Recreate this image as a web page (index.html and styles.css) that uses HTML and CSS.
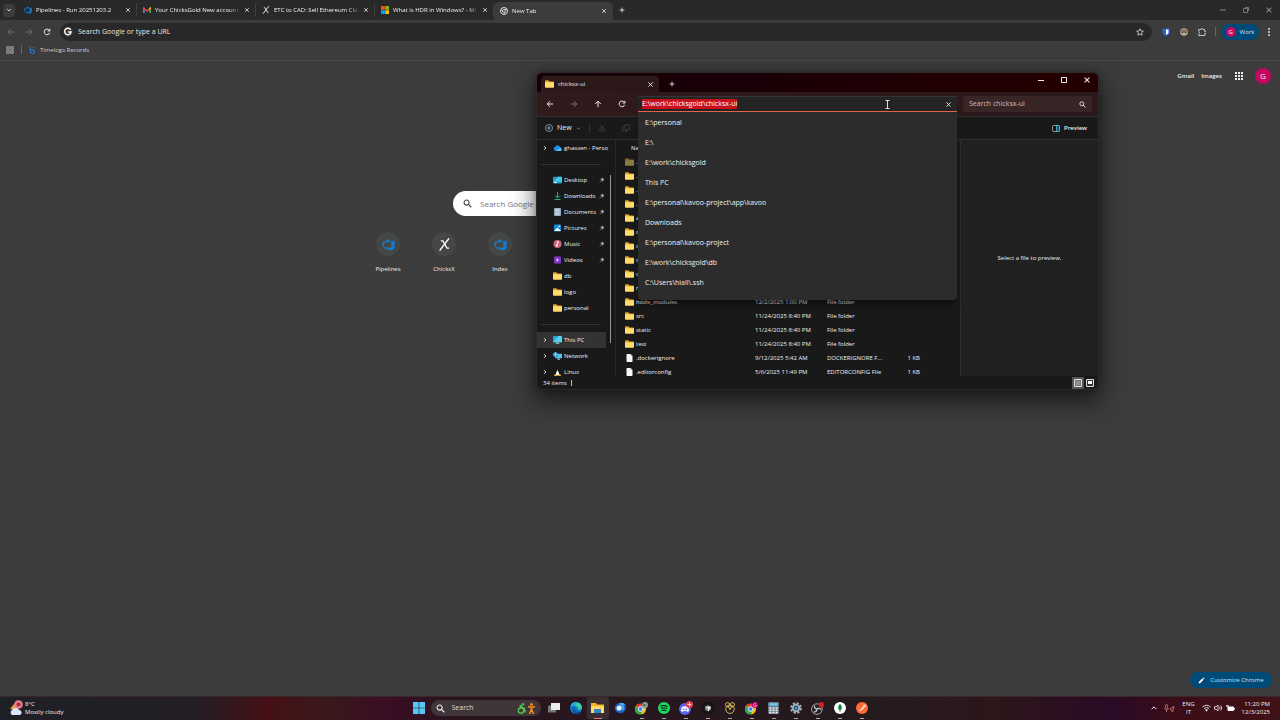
FILE: index.html
```html
<!doctype html>
<html lang="en">
<head>
<meta charset="utf-8">
<meta name="viewport" content="width=device-width">
<title>New Tab</title>
<link rel="stylesheet" href="styles.css">
</head>
<body>
<svg class="defs" aria-hidden="true">
  <symbol id="x" viewBox="0 0 10 10"><path d="M2 2l6 6M8 2l-6 6" fill="none" stroke="currentColor" stroke-width="1.3"/></symbol>
  <symbol id="plus" viewBox="0 0 10 10"><path d="M5 1v8M1 5h8" fill="none" stroke="currentColor" stroke-width="1.4"/></symbol>
  <symbol id="arrow" viewBox="0 0 10 10"><path d="M9 5H1.5M5 1.500L1.500 5L5 8.500" fill="none" stroke="currentColor" stroke-width="1.2"/></symbol>
  <symbol id="chev" viewBox="0 0 10 10"><path d="M2 3.500l3 3l3-3" fill="none" stroke="currentColor" stroke-width="1.5"/></symbol>
  <symbol id="reload" viewBox="0 0 10 10"><path d="M8.300 6a3.500 3.500 0 1 1-.5-3.200L8.500 3.600M8.600 1v2.800H5.800" fill="none" stroke="currentColor" stroke-width="1.200"/></symbol>
  <symbol id="lens" viewBox="0 0 10 10"><circle cx="4" cy="4" r="2.800" fill="none" stroke="currentColor" stroke-width="1.200"/><path d="M6 6l3.200 3.200" stroke="currentColor" stroke-width="1.300"/></symbol>
  <symbol id="devops" viewBox="0 0 16 16"><path fill="#0f7bd4" d="M15.500 3v9.500l-4 3L5.500 13.200v2.300L2 11.200l9.300.8V4.200zM11.400 4.200L6 1v2.200L1.700 4.500.5 6v4.300l2 .9V5.700z"/></symbol>
  <symbol id="chicks" viewBox="0 0 16 16"><path d="M13.500.5L2 15.500" stroke="#fff" stroke-width="1.800"/><path d="M3.500 3.500h2.500l5 9h2.500" fill="none" stroke="#fff" stroke-width="1.500"/></symbol>
  <symbol id="folder" viewBox="0 0 16 13"><path fill="#e0a526" d="M0 1.500Q0 0 1.500 0H6l2 2h6.500Q16 2 16 3.500V5H0z"/><rect y="3.500" width="16" height="9.500" rx="1.200" fill="#ffdc6b"/></symbol>
  <symbol id="file" viewBox="0 0 12 16"><path d="M0 1.500Q0 0 1.500 0H8l4 4v10.500Q12 16 10.500 16h-9Q0 16 0 14.500z" fill="#f7f7f7"/><path d="M8 0v4h4z" fill="#b9b9b9"/></symbol>
  <symbol id="pin" viewBox="0 0 10 10"><path d="M5.500 1L9 4.500 7.500 5 6.500 8 2 3.500l3-1z" fill="#a4a4a4"/><path d="M4.500 5.500L1 9" stroke="#a4a4a4"/></symbol>
  <symbol id="pc" viewBox="0 0 16 14"><rect y="0" width="16" height="11" rx="1" fill="#2aa3d6"/><path d="M0 11L10 0h5l1 1v10z" fill="#56cfe8"/><path d="M6 11h4v2h2v1H4v-1h2z" fill="#8fb3c2"/></symbol>
  <symbol id="chrome" viewBox="0 0 20 20"><circle cx="10" cy="10" r="10" fill="#fbc116"/><path d="M10 10L1.400 5A10 10 0 0 1 18.700 5z" fill="#e33b2e"/><path d="M10 10L1.400 5A10 10 0 0 0 10 20l4.500-7.500z" fill="#2da94f"/><circle cx="10" cy="10" r="4.800" fill="#fff"/><circle cx="10" cy="10" r="3.700" fill="#3f83ef"/></symbol>
</svg>

<div class="browser">
  <header>
    <nav class="tabs">
      <button class="tabmenu" aria-label="Search tabs"><svg width="6" height="6"><use href="#chev"/></svg></button>
      <div class="tab"><svg width="8" height="8"><use href="#devops"/></svg><span>Pipelines - Run 20251203.2</span><button aria-label="Close"><svg width="6" height="6"><use href="#x"/></svg></button></div>
      <div class="tab"><svg width="8" height="8" viewBox="0 0 16 16"><path d="M0 3h3.500v11H0z" fill="#4285f4"/><path d="M12.500 3H16v11h-3.500z" fill="#34a853"/><path d="M0 2l8 6 8-6v4l-8 6-8-6z" fill="#ea4335"/><path d="M12.500 4.500L16 2v4l-3.500 2.500z" fill="#fbbc04"/></svg><span>Your ChicksGold New account</span><button aria-label="Close"><svg width="6" height="6"><use href="#x"/></svg></button></div>
      <div class="tab"><svg width="8" height="8"><use href="#chicks"/></svg><span>ETC to CAD: Sell Ethereum Clas</span><button aria-label="Close"><svg width="6" height="6"><use href="#x"/></svg></button></div>
      <div class="tab"><svg width="8" height="8" viewBox="0 0 16 16"><path d="M0 0h7.600v7.600H0z" fill="#f25022"/><path d="M8.400 0H16v7.600H8.400z" fill="#7fba00"/><path d="M0 8.400h7.600V16H0z" fill="#00a4ef"/><path d="M8.400 8.400H16V16H8.400z" fill="#ffb900"/></svg><span>What is HDR in Windows? - Mi</span><button aria-label="Close"><svg width="6" height="6"><use href="#x"/></svg></button></div>
      <div class="tab on"><svg width="8" height="8" viewBox="0 0 16 16"><circle cx="8" cy="8" r="7" fill="none" stroke="#ddd" stroke-width="2"/><circle cx="8" cy="8" r="3" fill="none" stroke="#ddd" stroke-width="1.600"/><path d="M8 5h6M5.500 9.500L2.500 4.500M10.500 9.500L7.500 15" stroke="#ddd" stroke-width="1.600"/></svg><span>New Tab</span><button aria-label="Close"><svg width="6" height="6"><use href="#x"/></svg></button></div>
      <button class="newtab" aria-label="New tab"><svg width="6" height="6"><use href="#plus"/></svg></button>
      <div class="winbtns dim">
        <button aria-label="Minimize"><svg width="6" height="6" viewBox="0 0 6 6"><path d="M0 3h6" stroke="currentColor"/></svg></button>
        <button aria-label="Restore"><svg width="6" height="6" viewBox="0 0 6 6"><path d="M.5 1.500h4v4h-4zM2 .5h3.500V4" fill="none" stroke="currentColor" stroke-width=".8"/></svg></button>
        <button aria-label="Close"><svg width="8" height="8"><use href="#x"/></svg></button>
      </div>
    </nav>
    <div class="toolbar">
      <button class="off" aria-label="Back"><svg width="8" height="8"><use href="#arrow"/></svg></button>
      <button class="off flip" aria-label="Forward"><svg width="8" height="8"><use href="#arrow"/></svg></button>
      <button aria-label="Reload"><svg width="8" height="8"><use href="#reload"/></svg></button>
      <div class="omni">
        <svg width="10" height="10" viewBox="0 0 16 16"><circle cx="8" cy="8" r="8" fill="#3c3c3c"/><path d="M12.300 4.500A5.200 5.200 0 1 0 13 8H8.200" fill="none" stroke="#fff" stroke-width="2.200"/></svg>
        <input aria-label="Address" placeholder="Search Google or type a URL">
        <svg width="8" height="8" viewBox="0 0 16 16"><path d="M8 1.500l2 4.500 4.800.4-3.700 3.200 1.200 4.800L8 11.800l-4.300 2.600 1.200-4.800L1.200 6.400 6 6z" fill="none" stroke="#ddd" stroke-width="1.600"/></svg>
      </div>
      <div class="exts">
        <svg width="8" height="8" viewBox="0 0 16 16"><path d="M1 1h14v8q0 4-7 7-7-3-7-7z" fill="#2267d8"/><path d="M8 3h5v6q0 2.500-5 4.800z" fill="#fff"/></svg>
        <svg width="8" height="8" viewBox="0 0 16 16"><circle cx="8" cy="8" r="7.500" fill="#bfae9c"/><path d="M1 5q7-5 14 0v2H1z" fill="#85705f"/><circle cx="5" cy="8.500" r="2" fill="#40352e"/><circle cx="11" cy="8.500" r="2" fill="#40352e"/></svg>
        <svg width="8" height="8" viewBox="0 0 16 16"><path d="M1.500 3h4.500a2 2 0 1 1 4 0h3.500v4a2.200 2.200 0 1 1 0 4.200V15h-12v-3.800a2.200 2.200 0 0 0 0-4.200z" fill="none" stroke="#ddd" stroke-width="1.700"/></svg>
      </div>
      <i class="bar"></i>
      <button class="profile"><b>G</b>Work</button>
      <button aria-label="Menu"><svg width="4" height="8" viewBox="0 0 4 8"><path d="M2 0v2M2 3v2M2 6v2" stroke="#ddd" stroke-width="1.500"/></svg></button>
    </div>
    <div class="bookmarks">
      <svg width="8" height="8" viewBox="0 0 16 16"><path d="M1.500 1.500h5v5h-5zM9.500 1.500h5v5h-5zM1.500 9.500h5v5h-5zM9.500 9.500h5v5h-5z" fill="none" stroke="#aaa" stroke-width="2"/></svg>
      <i class="bar"></i>
      <a href="#"><svg width="7" height="8" viewBox="0 0 14 16"><path d="M2 1v6h6M3 7v5q0 3 4 3t4-3.500T7 8" fill="none" stroke="#2f78c8" stroke-width="2.200"/><circle cx="9.500" cy="3.500" r="1.600" fill="#2f78c8"/></svg>Timelogs Records</a>
    </div>
  </header>

  <main>
    <div class="gnav">
      <a href="#">Gmail</a>
      <a href="#">Images</a>
      <svg width="8" height="8" viewBox="0 0 8 8"><path d="M0 1h8M0 4h8M0 7h8" stroke="#eee" stroke-width="2" stroke-dasharray="2 1"/></svg>
      <b class="avatar">G</b>
    </div>
    <div class="search"><svg width="9" height="9"><use href="#lens"/></svg><input aria-label="Search" placeholder="Search Google or type a URL"></div>
    <div class="shortcuts">
      <a href="#"><i><svg width="13" height="13"><use href="#devops"/></svg></i>Pipelines</a>
      <a href="#"><i><svg width="13" height="13"><use href="#chicks"/></svg></i>ChicksX</a>
      <a href="#"><i><svg width="13" height="13"><use href="#devops"/></svg></i>Index</a>
    </div>
    <button class="customize"><svg width="7" height="7" viewBox="0 0 10 10"><path d="M1 9V7l5-5 2 2-5 5zM6.700 1.300L7.500.5l2 2-.8.8z" fill="#fff"/></svg>Customize Chrome</button>
  </main>
</div>

<section class="explorer">
  <div class="etitle">
    <div class="etab"><svg width="9" height="8"><use href="#folder"/></svg><span>chicksx-ui</span><button aria-label="Close tab"><svg width="7" height="7"><use href="#x"/></svg></button></div>
    <button class="newtab" aria-label="New tab"><svg width="6" height="6"><use href="#plus"/></svg></button>
    <div class="winbtns">
      <button aria-label="Minimize"><svg width="6" height="6" viewBox="0 0 6 6"><path d="M0 3.500h6" stroke="currentColor"/></svg></button>
      <button aria-label="Maximize"><svg width="6" height="6" viewBox="0 0 6 6"><path d="M.5.5h5v5h-5z" fill="none" stroke="currentColor"/></svg></button>
      <button aria-label="Close"><svg width="8" height="8"><use href="#x"/></svg></button>
    </div>
  </div>
  <div class="eaddr">
    <div class="enav">
      <button aria-label="Back"><svg width="8" height="8"><use href="#arrow"/></svg></button>
      <button class="off flip" aria-label="Forward"><svg width="8" height="8"><use href="#arrow"/></svg></button>
      <button class="up" aria-label="Up"><svg width="8" height="8"><use href="#arrow"/></svg></button>
      <button aria-label="Refresh"><svg width="8" height="8"><use href="#reload"/></svg></button>
    </div>
    <div class="path">
      <input id="path" aria-label="Path" value="E:\work\chicksgold\chicksx-ui" spellcheck="false">
      <button aria-label="Clear"><svg width="7" height="7"><use href="#x"/></svg></button>
      <svg class="ibeam" width="5" height="9" viewBox="0 0 5 9"><path d="M.5.5h4M.5 8.500h4M2.500 0v9" stroke="#ddd" fill="none"/></svg>
      <ul class="recent">
        <li>E:\personal</li>
        <li>E:\</li>
        <li>E:\work\chicksgold</li>
        <li>This PC</li>
        <li>E:\personal\kavoo-project\app\kavoo</li>
        <li>Downloads</li>
        <li>E:\personal\kavoo-project</li>
        <li>E:\work\chicksgold\db</li>
        <li>C:\Users\hiall\.ssh</li>
      </ul>
    </div>
    <div class="find"><input aria-label="Search folder" placeholder="Search chicksx-ui"><svg width="7" height="7"><use href="#lens"/></svg></div>
  </div>
  <div class="cmds">
    <button><svg width="8" height="8" viewBox="0 0 16 16"><circle cx="8" cy="8" r="7" fill="none" stroke="#9fb6c4" stroke-width="1.500"/><path d="M8 4v8M4 8h8" stroke="#7cc4ec" stroke-width="1.500"/></svg>New<svg class="more" width="5" height="5"><use href="#chev"/></svg></button>
    <i class="bar"></i>
    <button class="off" aria-label="Cut"><svg width="8" height="8" viewBox="0 0 16 16"><path d="M3 1l8 10M13 1L5 11" stroke="currentColor" stroke-width="1.300"/><circle cx="4" cy="13" r="2.300" fill="none" stroke="currentColor"/><circle cx="12" cy="13" r="2.300" fill="none" stroke="currentColor"/></svg></button>
    <button class="off" aria-label="Copy"><svg width="8" height="8" viewBox="0 0 16 16"><path d="M6 1.500h9v10H6zM6 4.500H1.500v10h8v-3" fill="none" stroke="currentColor" stroke-width="1.300"/></svg></button>
    <button class="preview"><svg width="8" height="7" viewBox="0 0 16 14"><rect x="1" y="1" width="14" height="12" rx="2" fill="none" stroke="#a9c4d0" stroke-width="1.500"/><path d="M9 1v12h4q2 0 2-2V3q0-2-2-2z" fill="#12506c" stroke="#5fc0ea" stroke-width="1.500"/></svg>Preview</button>
  </div>
  <div class="ebody">
    <ul class="side">
      <li><svg class="tw" width="6" height="6"><use href="#chev"/></svg><svg width="9" height="8" viewBox="0 0 18 14"><path d="M5 13a4.500 4.500 0 0 1-.5-8.500 5.500 5.500 0 0 1 10 1A4 4 0 0 1 14 13z" fill="#1c8fe8"/><path d="M5 13l9-6q4 1 3.500 3.500T14 13z" fill="#5cc3f7"/></svg><span>ghassen - Perso</span></li>
      <li class="rule"></li>
      <li><svg width="9" height="8" viewBox="0 0 16 14"><rect y="1" width="16" height="12" rx="1.500" fill="#1d9bd1"/><path d="M0 10L9 1h6l1 1v8z" fill="#46c8dc"/><path d="M2 10.500h5v1.500H2z" fill="#fff"/></svg><span>Desktop</span><svg class="pin" width="6" height="6"><use href="#pin"/></svg></li>
      <li><svg width="9" height="8" viewBox="0 0 16 16"><path d="M8 0v11M3 7l5 5 5-5M2 15h12" fill="none" stroke="#20b584" stroke-width="2"/></svg><span>Downloads</span><svg class="pin" width="6" height="6"><use href="#pin"/></svg></li>
      <li><svg width="9" height="8" viewBox="0 0 16 16"><rect x="1" width="14" height="16" rx="1.500" fill="#91abc3"/><path d="M4 4h8M4 8h3M9 8h3M4 12h8" stroke="#f0f6fb" stroke-width="2"/></svg><span>Documents</span><svg class="pin" width="6" height="6"><use href="#pin"/></svg></li>
      <li><svg width="9" height="8" viewBox="0 0 16 16"><rect x="1" y="1" width="14" height="14" rx="1.500" fill="#1789d5"/><path d="M1 14l7-7 7 7z" fill="#eef8ff"/><circle cx="11.500" cy="4.500" r="1.600" fill="#fff"/></svg><span>Pictures</span><svg class="pin" width="6" height="6"><use href="#pin"/></svg></li>
      <li><svg width="9" height="8" viewBox="0 0 16 16"><circle cx="8" cy="8" r="8" fill="#d0657b"/><path d="M8 11V3l3 2" fill="none" stroke="#fff" stroke-width="1.600"/><circle cx="6.500" cy="11" r="2" fill="#fff"/></svg><span>Music</span><svg class="pin" width="6" height="6"><use href="#pin"/></svg></li>
      <li><svg width="9" height="8" viewBox="0 0 16 16"><rect x="1" y="1" width="14" height="14" rx="1.500" fill="#8a3fd1"/><path d="M3 2v12M13 2v12" stroke="#512089" stroke-width="1.600" stroke-dasharray="2 1.500"/><path d="M6.500 5l4 3-4 3z" fill="#fff"/></svg><span>Videos</span><svg class="pin" width="6" height="6"><use href="#pin"/></svg></li>
      <li><svg width="9" height="8"><use href="#folder"/></svg><span>db</span></li>
      <li><svg width="9" height="8"><use href="#folder"/></svg><span>logo</span></li>
      <li><svg width="9" height="8"><use href="#folder"/></svg><span>personal</span></li>
      <li class="rule"></li>
      <li class="sel"><svg class="tw" width="6" height="6"><use href="#chev"/></svg><svg width="9" height="8"><use href="#pc"/></svg><span>This PC</span></li>
      <li><svg class="tw" width="6" height="6"><use href="#chev"/></svg><svg width="9" height="8" viewBox="0 0 16 14"><rect x="4" y="3" width="12" height="8" fill="#4dc4e6"/><path d="M8 11h4v3H8z" fill="#8fb3c2"/><circle cx="4.500" cy="4.500" r="4.500" fill="#2a8fd0"/><path d="M0 4.500h9M4.500 0v9" stroke="#c7ecf8"/></svg><span>Network</span></li>
      <li><svg class="tw" width="6" height="6"><use href="#chev"/></svg><svg width="9" height="8" viewBox="0 0 16 16"><path d="M8 0q3 0 3 4 0 2 2 5t1 6H2q-1-3 1-6t2-5q0-4 3-4z" fill="#111"/><path d="M8 5q2 1 3 5t-1 5H6q-2-1-1-5t3-5z" fill="#fff"/><path d="M1 16l2-5 4 5zM15 16l-2-5-4 5zM6.500 3.500h3L8 6z" fill="#f2b90c"/></svg><span>Linux</span></li>
    </ul>
    <div class="files">
      <table>
        <thead><tr><th class="n">Na</th><th class="d"></th><th class="t"></th><th class="s"></th></tr></thead>
        <tbody>
          <tr class="faded"><td><svg width="9" height="8"><use href="#folder"/></svg>.</td></tr>
          <tr><td><svg width="9" height="8"><use href="#folder"/></svg>.</td></tr>
          <tr><td><svg width="9" height="8"><use href="#folder"/></svg>.</td></tr>
          <tr><td><svg width="9" height="8"><use href="#folder"/></svg>.</td></tr>
          <tr><td><svg width="9" height="8"><use href="#folder"/></svg>a</td></tr>
          <tr><td><svg width="9" height="8"><use href="#folder"/></svg>c</td></tr>
          <tr><td><svg width="9" height="8"><use href="#folder"/></svg>c</td></tr>
          <tr><td><svg width="9" height="8"><use href="#folder"/></svg>c</td></tr>
          <tr><td><svg width="9" height="8"><use href="#folder"/></svg>c</td></tr>
          <tr><td><svg width="9" height="8"><use href="#folder"/></svg>n</td></tr>
          <tr><td><svg width="9" height="8"><use href="#folder"/></svg>node_modules</td><td>12/2/2025 1:00 PM</td><td>File folder</td><td></td></tr>
          <tr><td><svg width="9" height="8"><use href="#folder"/></svg>src</td><td>11/24/2025 8:40 PM</td><td>File folder</td><td></td></tr>
          <tr><td><svg width="9" height="8"><use href="#folder"/></svg>static</td><td>11/24/2025 8:40 PM</td><td>File folder</td><td></td></tr>
          <tr><td><svg width="9" height="8"><use href="#folder"/></svg>test</td><td>11/24/2025 8:40 PM</td><td>File folder</td><td></td></tr>
          <tr><td><svg width="9" height="8"><use href="#file"/></svg>.dockerignore</td><td>9/12/2025 5:42 AM</td><td>DOCKERIGNORE F...</td><td>1 KB</td></tr>
          <tr><td><svg width="9" height="8"><use href="#file"/></svg>.editorconfig</td><td>5/6/2025 11:49 PM</td><td>EDITORCONFIG File</td><td>1 KB</td></tr>
        </tbody>
      </table>
    </div>
    <div class="pane">Select a file to preview.</div>
  </div>
  <div class="status">
    <span>34 items</span><i></i>
    <button class="on" aria-label="Details"><svg width="8" height="8" viewBox="0 0 8 8"><path d="M.5.5h7v7h-7z" fill="#777" stroke="#ddd"/><path d="M2 3h4M2 5h4" stroke="#aaa"/></svg></button>
    <button aria-label="Large icons"><svg width="8" height="8" viewBox="0 0 8 8"><path d="M.5.5h7v7h-7z" fill="#333" stroke="#ddd"/><path d="M2 2h4v3H2z" fill="#fff"/></svg></button>
  </div>
</section>

<footer class="taskbar">
  <div class="weather">
    <svg width="14" height="16" viewBox="0 0 14 16"><path d="M1 9l5-6 4 7z" fill="#f0a04b"/><circle cx="9.500" cy="4.500" r="4.300" fill="#ef7d88"/><circle cx="9.500" cy="4.500" r="2" fill="#9c2f3f"/><path d="M3 15a3 3 0 0 1 0-5 4 4 0 0 1 7 0 2.600 2.600 0 0 1 1 5z" fill="#d6e6fb"/></svg>
    <div>8°C<br>Mostly cloudy</div>
  </div>
  <div class="apps">
    <button aria-label="Start"><svg width="12" height="12" viewBox="0 0 12 12"><path d="M0 0h5.700v5.700H0zM6.300 0H12v5.700H6.300zM0 6.300h5.700V12H0zM6.300 6.300H12V12H6.300z" fill="#55c8f5"/></svg></button>
    <label class="tsearch"><svg width="9" height="9"><use href="#lens"/></svg><input placeholder="Search">
      <svg width="19" height="11" viewBox="0 0 19 11"><g fill="none" stroke="#4fc04c" stroke-width="1.500"><circle cx="4" cy="7.500" r="2.700"/><path d="M5 2.500L3.500 5h3.500l1.500 4.500M2.500 3L5 2.500"/></g><circle cx="6" cy="1.300" r="1.300" fill="#4fc04c"/><circle cx="14.500" cy="1.500" r="1.500" fill="#f08a24"/><path d="M11 3.500l3.500 1 3.500-1M14.500 4v3M14.500 6L12.500 11M14.500 6l2 5" fill="none" stroke="#f08a24" stroke-width="1.700"/></svg></label>
    <button aria-label="Task view"><svg width="12" height="12" viewBox="0 0 12 12"><path d="M0 3.500h8v7H0z" fill="#777"/><path d="M3 1h9v7H3z" fill="#ececec"/></svg></button>
    <button aria-label="Edge"><svg width="12" height="12" viewBox="0 0 20 20"><circle cx="10" cy="10" r="10" fill="#1374cb"/><path d="M1 6A10 10 0 0 1 20 9q0 4-4 4-3 0-3-2 1-3-3-4-5-1-9-1z" fill="#3fcf9d"/><path d="M1 6.500Q5 0 12 .3q-1 4-3 6-5-1-8 .2z" fill="#1ea7dc"/><path d="M8 9q-2 5 3 7 4 2 7-1-2 5-8 5-5-1-5-6 0-4 3-5z" fill="#0c4d9c"/></svg></button>
    <button class="run now" aria-label="File Explorer"><svg width="13" height="12" viewBox="0 0 13 12"><path d="M0 1h5l1 1.500h7V11H0z" fill="#f3b429"/><path d="M0 4h13v7H0z" fill="#ffdb62"/><path d="M3 7h7v4H3z" fill="#3187c8"/></svg></button>
    <button aria-label="Thunderbird"><svg width="12" height="12" viewBox="0 0 20 20"><path d="M2 6Q8-1 17 2l2 3q3 8-3 12-7 4-12-1-4-4-2-10z" fill="#1b62c4"/><path d="M8 3q6-4 11 2l-4 1q4 5-1 9 0-8-6-12z" fill="#48a9f2"/><circle cx="8.500" cy="10" r="4.300" fill="#dfeefc"/></svg></button>
    <button class="run" aria-label="Chrome"><svg width="13" height="13" viewBox="0 0 26 26"><use href="#chrome" y="3" width="22" height="22"/><circle cx="20" cy="6" r="6" fill="#8da4a0"/><path d="M16 6h7M18 3v6" stroke="#39474a" stroke-width="1.500"/></svg></button>
    <button class="run" aria-label="Spotify"><svg width="12" height="12" viewBox="0 0 20 20"><circle cx="10" cy="10" r="10" fill="#1ed760"/><path d="M4 7q6-2.500 12 1M5 10.500q5-2 10 1M6 14q4-1.500 8 .8" fill="none" stroke="#101010" stroke-width="1.800"/></svg></button>
    <button class="run" aria-label="Discord"><svg width="14" height="14" viewBox="0 0 28 28"><circle cx="12" cy="16" r="12" fill="#5865f2"/><path d="M6 12q6-3 12 0 2 4 2 8l-4 2-1-2H9l-1 2-4-2q0-4 2-8z" fill="#fff"/><circle cx="9.500" cy="16.500" r="1.700" fill="#5865f2"/><circle cx="14.500" cy="16.500" r="1.700" fill="#5865f2"/><circle cx="21" cy="7" r="7" fill="#e33f49"/><path d="M17 7h8M21 3v8" stroke="#fff" stroke-width="1.500"/></svg></button>
    <button class="run" aria-label="Cursor"><svg width="12" height="12" viewBox="0 0 20 20"><rect width="20" height="20" rx="4" fill="#151515"/><path d="M10 5l5 3v5l-5 3-5-3V8z" fill="#8b8b8b"/><path d="M5 8h10l-5 8V10z" fill="#f2f2f2"/></svg></button>
    <button class="run" aria-label="Beekeeper"><svg width="12" height="12" viewBox="0 0 20 20"><g fill="none" stroke="#d9bf58" stroke-width="1.600"><circle cx="10" cy="12" r="7"/><circle cx="6" cy="4.500" r="3.500"/><circle cx="14" cy="4.500" r="3.500"/><path d="M6 8q4 1 4 5 0-4 4-5"/></g></svg></button>
    <button class="run" aria-label="Chrome work"><svg width="13" height="13" viewBox="0 0 26 26"><use href="#chrome" y="3" width="22" height="22"/><circle cx="20" cy="6" r="6" fill="#c4056b"/><path d="M22.500 4.500a3 3 0 1 0 .5 2.500h-2.500" fill="none" stroke="#fff"/></svg></button>
    <button class="run" aria-label="Calculator"><svg width="11" height="12" viewBox="0 0 18 20"><rect width="18" height="20" rx="2" fill="#6c7a86"/><path d="M2 2h14v4H2z" fill="#65cdf0"/><path d="M2 10h14M2 14h14M2 18h14" stroke="#e4edf2" stroke-width="2.600" stroke-dasharray="3.500 1.700"/></svg></button>
    <button class="run" aria-label="Settings"><svg width="12" height="12" viewBox="0 0 20 20"><circle cx="10" cy="10" r="8.300" fill="none" stroke="#9eacb7" stroke-width="3" stroke-dasharray="4 2.500"/><circle cx="10" cy="10" r="7" fill="#a7b3bd"/><circle cx="10" cy="10" r="4" fill="#20445f"/><circle cx="10" cy="10" r="2.500" fill="#4a9bd4"/></svg></button>
    <button class="run" aria-label="OBS"><svg width="13" height="13" viewBox="0 0 22 22"><circle cx="10" cy="12" r="9" fill="#222" stroke="#c9c9c9" stroke-width="1.300"/><path d="M10 12q-5-1-4-6M10 12q4-3 7 1M10 12q0 5-5 5" fill="none" stroke="#ccc" stroke-width="2"/><circle cx="17.500" cy="4.500" r="4.500" fill="#e21b23"/></svg></button>
    <button class="run" aria-label="MongoDB Compass"><svg width="12" height="12" viewBox="0 0 20 20"><circle cx="10" cy="10" r="10" fill="#fff"/><path d="M10 3q3.500 3 3 7-.5 3-3 4.500-2.500-1.500-3-4.500-.5-4 3-7z" fill="#10894a"/><path d="M10 8v9" stroke="#0a5a34"/></svg></button>
    <button class="run" aria-label="Postman"><svg width="12" height="12" viewBox="0 0 20 20"><circle cx="10" cy="10" r="10" fill="#ff6c37"/><path d="M5 15l7-7 2 1.500L7 15z" fill="#fff"/><circle cx="14" cy="6.500" r="2.300" fill="#ffd9c9"/></svg></button>
  </div>
  <div class="tray">
    <svg width="6" height="6" viewBox="0 0 10 10"><path d="M1 7l4-4 4 4" fill="none" stroke="#fff" stroke-width="1.500"/></svg>
    <svg width="11" height="9" viewBox="0 0 11 9"><path d="M1.500 1.500a1 1 0 0 1 2 0v2a1 1 0 0 1-2 0zM.5 4q.5 2 2 2t2-2M2.500 6v2M6 5l4-2.500L8.500 8l-1-2z" fill="none" stroke="#c9747a" stroke-width=".9"/></svg>
    <span class="lang">ENG<br>IT</span>
    <div class="sys">
      <svg width="9" height="8" viewBox="0 0 18 16"><path d="M1 6q8-7 16 0M4 9q5-4 10 0" fill="none" stroke="#ddd" stroke-width="2"/><path d="M6 11.500q3-2 6 0L9 15z" fill="#fff"/></svg>
      <svg width="9" height="8" viewBox="0 0 18 16"><path d="M1 5.500h3L8 2v12l-4-3.500H1zM11 5.500q2 2.500 0 5M13.500 3q4 5 0 10" fill="none" stroke="#fff" stroke-width="1.500"/></svg>
      <svg width="9" height="8" viewBox="0 0 18 16"><rect x="3" y="5" width="13" height="9" rx="2" fill="#fff"/><path d="M17 8v3" stroke="#fff" stroke-width="2"/><path d="M1 2v3q2 3 4 0V2" fill="#aaa" stroke="#fff"/></svg>
    </div>
    <span class="clock">11:20 PM<br>12/3/2025</span>
  </div>
</footer>
<script>
var p = document.getElementById("path");
p.focus();
p.select();
</script>
</body>
</html>
```
FILE: styles.css
```css
*{box-sizing:border-box}
body{margin:0; min-height:100vh; display:flex; flex-direction:column; background:#3c3c3c; color:#f0f0f0; overflow:hidden}
body,input,button{font:normal 7px/10px "Open Sans","Noto Sans",sans-serif}
button,input{background:none; border:0; padding:0; margin:0; color:inherit; outline:0; min-width:0}
button{display:flex; align-items:center; justify-content:center}
a{color:inherit; text-decoration:none}
ul{list-style:none; margin:0; padding:0}
svg{flex:none; display:block}
.defs{position:absolute; width:0; height:0}
.off{color:#777}
.flip svg{transform:scaleX(-1)}
.up svg{transform:rotate(90deg)}
.bar{width:1px; height:9px; background:#666}

/* browser */
.browser{flex:1; display:flex; flex-direction:column}
.tabs{display:flex; align-items:center; height:20px; background:#292929}
.tabmenu{width:12px; height:13px; margin:0 3px; border-radius:4px; background:#3c3c3c}
.tab{flex:0 1 119px; min-width:0; display:flex; align-items:center; gap:4px; height:14px; padding:0 5px 0 6px; border-right:1px solid #3e3e3e}
.tab span{flex:1; min-width:0; overflow:hidden; font-size:6px; white-space:nowrap; -webkit-mask:linear-gradient(90deg,#000 88%,transparent)}
.tab.on{height:18px; align-self:flex-end; padding:0 6px 1px; background:#3c3c3c; border:0; border-radius:5px 5px 0 0}
.newtab{width:18px; height:14px}
.winbtns{display:flex; margin-left:auto; align-self:stretch}
.winbtns button{width:23px}
.dim{color:#888}
.toolbar{display:flex; align-items:center; height:22px; padding:1px 6px 0 2px}
.toolbar>button{width:18px}
.omni{flex:1; display:flex; align-items:center; gap:5px; height:18px; margin:0 10px 0 4px; padding:0 8px 0 3px; border-radius:9px; background:#282828}
.omni input{flex:1}
.omni input::placeholder{color:#e6e6e6}
.exts{display:flex; gap:10px; margin-right:9px}
.toolbar>.profile{width:38px; height:16px; gap:4px; margin:0 5px; border-radius:8px; background:#004a77; color:#c8e6ff; font-size:6px}
.toolbar>button:last-child{width:10px}
.profile b{width:10px; border-radius:5px; background:#c2085f; color:#fff; font-weight:400}
.bookmarks{display:flex; align-items:center; gap:7px; height:19px; padding:0 6px 3px; border-bottom:1px solid #474747}
.bookmarks a{display:flex; gap:4px; align-items:center; font-size:6px; color:#ccc}
main{flex:1; display:flex; flex-direction:column; align-items:center}
.gnav{align-self:stretch; display:flex; align-items:center; justify-content:flex-end; gap:7px; height:30px; padding-right:9px; font-size:6px; font-weight:600}
.gnav svg{margin-left:6px}
.avatar{width:16px; height:16px; margin-left:5px; border-radius:8px; background:#c2085f; font:normal 8px/16px "Open Sans",sans-serif; text-align:center}
.search{display:flex; align-items:center; gap:8px; width:374px; height:25px; margin:100px 0 16px; padding:0 10px; border-radius:13px; background:#fff; color:#444}
.search input{flex:1; font-size:8px}
.search input::placeholder{color:#777}
.shortcuts{display:grid; grid-template-columns:repeat(10,56px)}
.shortcuts a{display:flex; flex-direction:column; align-items:center; gap:7px; font-size:6px; line-height:12px}
.shortcuts i{display:grid; place-items:center; width:24px; height:24px; border-radius:12px; background:#444746}
.customize{gap:5px; width:82px; height:16px; margin:auto 8px 8px auto; border-radius:8px; background:#004a77; color:#c8e6ff; font-size:6px}

/* explorer window */
.explorer{position:absolute; left:537px; top:73px; width:561px; display:flex; flex-direction:column; border-radius:5px; background:#191919; box-shadow:0 0 0 1px #2e2a2a, 0 0 6px rgba(0,0,0,.4), 0 10px 22px 4px rgba(0,0,0,.5)}
.etitle{display:flex; align-items:center; height:19px; padding-left:4px; border-radius:5px 5px 0 0; background:linear-gradient(90deg,#160008,#1a0006 40%,#260000)}
.etab{display:flex; align-items:center; gap:4px; width:118px; height:16px; margin-top:3px; padding:0 5px 0 4px; border-radius:4px 4px 0 0; background:#2c1719}
.etab span{flex:1; font-size:6px}
.etitle .newtab{width:26px; margin-top:3px}
.etitle .winbtns{margin-top:-6px}
.eaddr{display:flex; align-items:center; height:25px; padding-right:6px; background:linear-gradient(90deg,#301a1b,#2c1719 60%,#2c191b); border-bottom:1px solid #303030}
.enav{display:flex; width:101px; padding-left:1px}
.enav button{width:24px}
.path{position:relative; flex:1; display:flex; align-items:center; height:16px; padding:0 5px 0 4px; background:#242424; border-top:1px solid #3a3333; border-bottom:1px solid #e0654c}
.path input{flex:1}
.path input::selection{background:#c8101c; color:#fff}
.ibeam{position:absolute; left:247px; top:3px}
.recent{position:absolute; left:0; right:0; top:15px; padding:1px 0 7px; border-radius:0 0 4px 4px; background:#2c2c2c; box-shadow:0 7px 6px -3px rgba(0,0,0,.5); z-index:2}
.recent li{padding-left:7px; line-height:20px}
.find{display:flex; align-items:center; width:129px; height:16px; margin-left:6px; padding:0 6px; border-radius:2px; background:#382627}
.find input{flex:1}
.find input::placeholder{color:#c8bebe}
.cmds{display:flex; align-items:center; gap:8px; height:23px; padding:0 11px 0 8px; border-bottom:1px solid #303030}
.cmds button{gap:4px}
.cmds .off{margin-right:8px; color:#4d4d4d}
.cmds .bar{background:#333}
.more{color:#999}
.cmds .preview{margin-left:auto; font-size:6px; font-weight:600}
.ebody{display:grid; grid-template-columns:79px 1fr 138px; height:236px; overflow:hidden; font-size:6px}
.side{position:relative; border-right:1px solid #282828; overflow:hidden}
.side:after{content:""; position:absolute; right:4px; top:35px; width:1px; height:168px; background:#999}
.side li{display:grid; grid-template-columns:16px 9px 1fr 7px; align-items:center; height:16px; width:69px}
.side li>svg{grid-column:2}
.side li>.tw{grid-column:1; margin-left:5px; transform:rotate(-90deg)}
.side li>span{grid-column:3/5; grid-row:1; padding-left:2px; white-space:nowrap}
.side li>.pin{grid-column:4; grid-row:1}
.side .rule{height:1px; margin:8px 4px 7px; width:60px; background:#333}
.side .sel{background:#333}
.files{overflow:hidden}
table{border-collapse:collapse; table-layout:fixed; width:304px}
th,td{height:14px; padding:0; font-weight:400; text-align:left; white-space:nowrap}
th{height:15px}
th.n{width:139px; padding-left:15px}
th.d{width:72px}
th.t{width:65px}
td svg{display:inline-block; vertical-align:middle; margin:0 2px 0 9px}
td:last-child:not(:first-child){text-align:right}
.faded svg{opacity:.5}
.pane{display:grid; place-items:center; background:#202020; border-left:1px solid #2c2c2c}
.status{display:flex; align-items:center; height:13px; padding:0 2px 0 6px; font-size:6px}
.status i{width:1px; height:6px; margin:0 auto 0 4px; background:#bbb}
.status button{width:12px; height:12px}
.status .on{background:#555}

/* taskbar */
.taskbar{display:grid; grid-template-columns:1fr auto 1fr; align-items:center; height:24px; box-shadow:inset 0 1px #38282c; background:linear-gradient(90deg,#1f1f27,#231f25 15%,#451015 21%,#38191a 26%,#3a0d24 30%,#29151e 36%,#241a1e 68%,#2c161a 78%,#2a0a26 87%,#3c0d18 92%,#401216)}
.weather{display:flex; gap:2px; padding-left:9px; font-size:6px; line-height:8px}
.apps{display:flex; align-items:center}
.apps button{position:relative; width:22px; height:22px}
.tsearch{display:flex; align-items:center; gap:7px; width:110px; height:16px; margin:0 2px 0 1px; padding:0 5px; border-radius:8px; background:#403539}
.tsearch input{flex:1}
.tsearch input::placeholder{color:#ddd}
.run:after{content:""; position:absolute; left:9px; bottom:0; width:4px; height:1px; background:#aaa}
.now{background:#3a2e30; border-radius:3px}
.now:after{left:7px; width:8px; background:#f07a7a}
.tray{display:flex; align-items:center; justify-content:flex-end; gap:7px; padding-right:10px; font-size:6px; line-height:8px}
.lang{text-align:center}
.sys{display:flex; gap:3px}
.clock{text-align:right}
```
